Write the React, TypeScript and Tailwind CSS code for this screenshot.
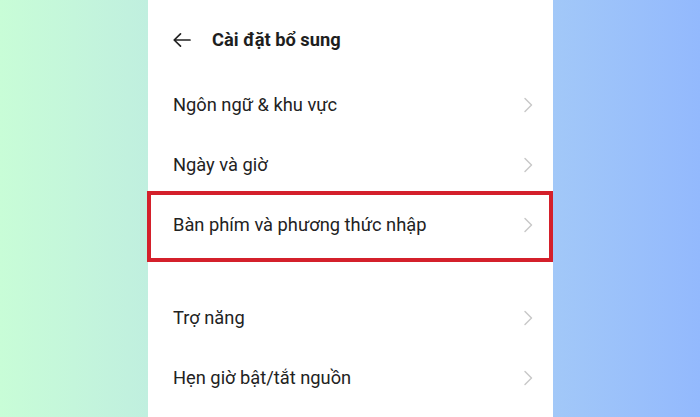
import React from "react";

function Chevron() {
  return (
    <svg width="10" height="16" viewBox="0 0 10 16" fill="none" className="shrink-0">
      <path d="M2 1.5 L8.5 8 L2 14.5" stroke="#c9c9c9" strokeWidth="1.5" strokeLinecap="round" strokeLinejoin="round" />
    </svg>
  );
}

function Row({ label }: { label: string }) {
  return (
    <div className="flex h-[60px] items-center justify-between pl-[25px] pr-[20px]">
      <span className="text-[18.3px] text-[#222222]">{label}</span>
      <Chevron />
    </div>
  );
}

export default function App() {
  return (
    <div
      className="flex h-[417px] w-[700px] overflow-hidden"
      style={{ fontFamily: "Roboto, 'Noto Sans', sans-serif" }}
    >
      <div className="w-[148px] shrink-0 bg-gradient-to-r from-[#c8fdd7] to-[#c0efdf]" />
      <div className="relative w-[405px] shrink-0 bg-white">
        <div className="flex h-[75px] items-center pl-[24px] pt-[5px]">
          <svg width="20" height="16" viewBox="0 0 20 16" fill="none">
            <path d="M18 8 H2.5 M8.5 1.8 L2.2 8 L8.5 14.2" stroke="#222" strokeWidth="1.7" strokeLinecap="round" strokeLinejoin="round" />
          </svg>
          <span className="ml-[20px] text-[18.3px] font-bold text-[#1e1e1e]">Cài đặt bổ sung</span>
        </div>
        <Row label="Ngôn ngữ & khu vực" />
        <Row label="Ngày và giờ" />
        <div className="relative">
          <Row label="Bàn phím và phương thức nhập" />
          <div className="pointer-events-none absolute -left-[1px] -right-[0px] -top-[4px] -bottom-[7px] border-[4px] border-[#d4202b]" />
        </div>
        <div className="h-[33px]" />
        <Row label="Trợ năng" />
        <Row label="Hẹn giờ bật/tắt nguồn" />
      </div>
      <div className="flex-1 bg-gradient-to-r from-[#a2c8f8] to-[#93b9fd]" />
    </div>
  );
}
